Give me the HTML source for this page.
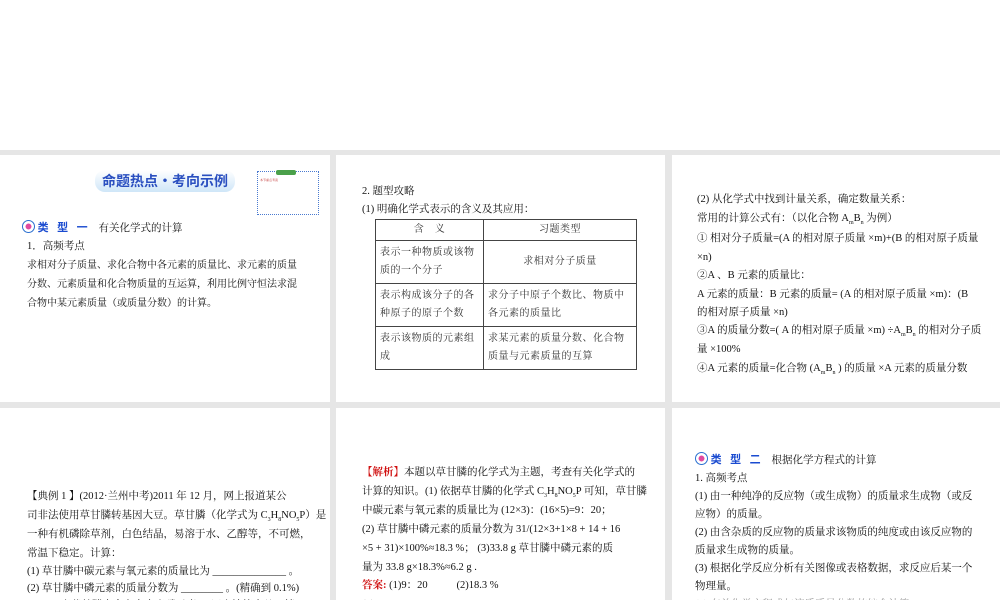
<!DOCTYPE html><html><head><meta charset="utf-8"><style>
body{margin:0;width:1000px;height:600px;background:#fff;position:relative;overflow:hidden;font-family:"Liberation Serif","Noto Serif CJK SC","Noto Sans CJK SC",serif;color:#111}
.g{position:absolute;left:0;top:150px;width:1000px;height:450px;background:#e6e6e6}
.s{position:absolute;background:#fff;overflow:hidden}
.t{position:absolute;font-size:10.5px;line-height:19px;white-space:nowrap}
.r{color:#d01010;font-weight:bold}
sub{font-size:6px}
table{border-collapse:collapse;font-size:10px;position:absolute;table-layout:fixed}
td{border:1px solid #444;padding:0 4px;line-height:18px;color:#333;letter-spacing:0.5px;word-break:break-all}
.tag{color:#1a4bd0;font-weight:bold;font-family:"Noto Sans CJK SC",sans-serif;font-size:11px;letter-spacing:3px}
.ci{display:inline-block;width:11px;height:11px;border:1.5px solid #2a6fd0;border-radius:50%;vertical-align:-2px;background:radial-gradient(#e04aa0 35%,#fff 40%)}
</style></head><body>
<div class="g"></div>
<div class="s" style="left:0;top:155px;width:330px;height:247px">
 <div style="position:absolute;left:95px;top:15px;width:140px;height:22px;background:linear-gradient(#fff,#cfe6f8);border-radius:10px"></div>
 <div style="position:absolute;left:102px;top:16px;font-size:14px;font-weight:bold;color:#2a4fc0;font-family:'Noto Sans CJK SC',sans-serif">命题热点·考向示例</div>
 <div style="position:absolute;left:257px;top:16px;width:56px;height:36px;border:1px dotted #4a7ad0;font-size:3px;color:#c03030;line-height:5px;padding:6px 2px 0"><div style="position:absolute;left:18px;top:-2px;width:20px;height:5px;background:#4aa04a;border-radius:2px"></div>本节重点考查</div>
 <div class="t" style="left:22px;top:63px"><span class="ci"></span> <span class="tag">类 型 一</span> &nbsp; 有关化学式的计算</div>
 <div class="t" style="left:27px;top:82px">1．高频考点</div>
 <div class="t" style="left:27px;top:101px;font-size:10px">求相对分子质量、求化合物中各元素的质量比、求元素的质量</div>
 <div class="t" style="left:27px;top:120px;font-size:10px">分数、元素质量和化合物质量的互运算，利用比例守恒法求混</div>
 <div class="t" style="left:27px;top:139px;font-size:10px">合物中某元素质量（或质量分数）的计算。</div>
</div>
<div class="s" style="left:336px;top:155px;width:329px;height:247px">
 <div class="t" style="left:26px;top:27px">2. 题型攻略</div>
 <div class="t" style="left:26px;top:45px">(1) 明确化学式表示的含义及其应用：</div>
 <table style="left:39px;top:64px;width:262px">
 <colgroup><col style="width:108px"><col></colgroup>
 <tr><td style="height:20px;text-align:center">含　义</td><td style="text-align:center">习题类型</td></tr>
 <tr><td style="height:42px">表示一种物质或该物质的一个分子</td><td style="text-align:center">求相对分子质量</td></tr>
 <tr><td style="height:42px">表示构成该分子的各种原子的原子个数</td><td>求分子中原子个数比、物质中各元素的质量比</td></tr>
 <tr><td style="height:42px">表示该物质的元素组成</td><td>求某元素的质量分数、化合物质量与元素质量的互算</td></tr>
 </table>
</div>
<div class="s" style="left:672px;top:155px;width:328px;height:247px">
 <div class="t" style="left:25px;top:35px">(2) 从化学式中找到计量关系，确定数量关系：</div>
 <div class="t" style="left:25px;top:54px">常用的计算公式有：（以化合物 A<sub>m</sub>B<sub>n</sub> 为例）</div>
 <div class="t" style="left:25px;top:74px">① 相对分子质量=(A 的相对原子质量 ×m)+(B 的相对原子质量</div>
 <div class="t" style="left:25px;top:93px">×n)</div>
 <div class="t" style="left:25px;top:111px">②A 、B 元素的质量比：</div>
 <div class="t" style="left:25px;top:130px">A 元素的质量：B 元素的质量= (A 的相对原子质量 ×m)：(B</div>
 <div class="t" style="left:25px;top:148px">的相对原子质量 ×n)</div>
 <div class="t" style="left:25px;top:166px">③A 的质量分数=( A 的相对原子质量 ×m) ÷A<sub>m</sub>B<sub>n</sub> 的相对分子质</div>
 <div class="t" style="left:25px;top:185px">量 ×100%</div>
 <div class="t" style="left:25px;top:204px">④A 元素的质量=化合物 (A<sub>m</sub>B<sub>n</sub> ) 的质量 ×A 元素的质量分数</div>
</div>
<div class="s" style="left:0;top:408px;width:330px;height:192px">
 <div class="t" style="left:27px;top:79px">【典例 1 】(2012·兰州中考)2011 年 12 月，网上报道某公</div>
 <div class="t" style="left:27px;top:98px">司非法使用草甘膦转基因大豆。草甘膦（化学式为 C<sub>3</sub>H<sub>8</sub>NO<sub>5</sub>P）是</div>
 <div class="t" style="left:27px;top:117px">一种有机磷除草剂，白色结晶，易溶于水、乙醇等，不可燃，</div>
 <div class="t" style="left:27px;top:136px">常温下稳定。计算：</div>
 <div class="t" style="left:27px;top:154px">(1) 草甘膦中碳元素与氧元素的质量比为 ______________ 。</div>
 <div class="t" style="left:27px;top:171px">(2) 草甘膦中磷元素的质量分数为 ________ 。(精确到 0.1%)</div>
 <div class="t" style="left:27px;top:188px">(3)33.8 克草甘膦中含有多少克磷元素？(写出计算步骤，精</div>
</div>
<div class="s" style="left:336px;top:408px;width:329px;height:192px">
 <div class="t" style="left:26px;top:55px"><span class="r">【解析】</span>本题以草甘膦的化学式为主题，考查有关化学式的</div>
 <div class="t" style="left:26px;top:74px">计算的知识。(1) 依据草甘膦的化学式 C<sub>3</sub>H<sub>8</sub>NO<sub>5</sub>P 可知，草甘膦</div>
 <div class="t" style="left:26px;top:93px">中碳元素与氧元素的质量比为 (12×3)：(16×5)=9：20；</div>
 <div class="t" style="left:26px;top:112px">(2) 草甘膦中磷元素的质量分数为 31/(12×3+1×8 + 14 + 16</div>
 <div class="t" style="left:26px;top:131px">×5 + 31)×100%≈18.3 %； (3)33.8 g 草甘膦中磷元素的质</div>
 <div class="t" style="left:26px;top:150px">量为 33.8 g×18.3%≈6.2 g .</div>
 <div class="t" style="left:26px;top:168px"><span class="r">答案:</span> (1)9：20 &nbsp; &nbsp; &nbsp; &nbsp; &nbsp; (2)18.3 %</div>
 <div class="t" style="left:26px;top:187px">(3)33.8 g×18.3 %≈6.2 g</div>
</div>
<div class="s" style="left:672px;top:408px;width:328px;height:192px">
 <div class="t" style="left:23px;top:42px"><span class="ci"></span> <span class="tag">类 型 二</span> &nbsp; 根据化学方程式的计算</div>
 <div class="t" style="left:23px;top:61px">1. 高频考点</div>
 <div class="t" style="left:23px;top:79px">(1) 由一种纯净的反应物（或生成物）的质量求生成物（或反</div>
 <div class="t" style="left:23px;top:97px">应物）的质量。</div>
 <div class="t" style="left:23px;top:115px">(2) 由含杂质的反应物的质量求该物质的纯度或由该反应物的</div>
 <div class="t" style="left:23px;top:133px">质量求生成物的质量。</div>
 <div class="t" style="left:23px;top:151px">(3) 根据化学反应分析有关图像或表格数据，求反应后某一个</div>
 <div class="t" style="left:23px;top:169px">物理量。</div>
 <div class="t" style="left:23px;top:187px;color:#999">(4) 有关化学方程式与溶质质量分数的综合计算。</div>
</div>
</body></html>
